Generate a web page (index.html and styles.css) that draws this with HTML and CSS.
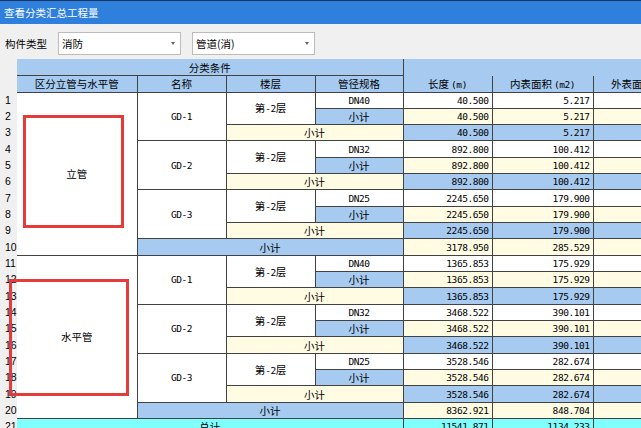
FILE: index.html
```html
<!DOCTYPE html>
<html lang="zh-CN">
<head>
  <meta charset="UTF-8" />
  <title>查看分类汇总工程量</title>
  <link rel="stylesheet" href="styles.css">
</head>
<body>

  <div class="titlebar">查看分类汇总工程量</div>

  <div class="toolbar">
    <span class="label">构件类型</span>
    <div class="combo"><span>消防</span><i class="arrow"></i></div>
    <div class="combo"><span>管道(消)</span><i class="arrow"></i></div>
  </div>

  <table class="grid">
    <colgroup>
      <col style="width:17px"><col style="width:120px"><col style="width:89px"><col style="width:89px">
      <col style="width:88px"><col style="width:89px"><col style="width:101px"><col style="width:101px">
    </colgroup>
    <thead>
      <tr class="h1">
        <td class="rn" rowspan="2"></td>
        <th colspan="4" class="c1">分类条件</th>
        <th colspan="3" class="open"></th>
      </tr>
      <tr class="h2">
        <th class="c1">区分立管与水平管</th>
        <th>名称</th>
        <th>楼层</th>
        <th>管径规格</th>
        <th class="top">长度<span class="lat unit">(m)</span></th>
        <th class="top">内表面积<span class="lat unit">(m2)</span></th>
        <th class="top">外表面积<span class="lat unit">(m2)</span></th>
      </tr>
    </thead>
    <tbody>
      <!-- 立管 -->
      <tr>
        <td class="rn">1</td>
        <td class="c1" rowspan="10">立管</td>
        <td class="code" rowspan="3">GD-1</td>
        <td rowspan="2">第<span class="lat">-2</span>层</td>
        <td class="code">DN40</td>
        <td class="n">40.500</td><td class="n">5.217</td><td></td>
      </tr>
      <tr>
        <td class="rn">2</td>
        <td class="blue">小计</td>
        <td class="n yellow">40.500</td><td class="n yellow">5.217</td><td class="yellow"></td>
      </tr>
      <tr>
        <td class="rn">3</td>
        <td colspan="2" class="yellow">小计</td>
        <td class="n blue">40.500</td><td class="n blue">5.217</td><td class="blue"></td>
      </tr>
      <tr>
        <td class="rn">4</td>
        <td class="code" rowspan="3">GD-2</td>
        <td rowspan="2">第<span class="lat">-2</span>层</td>
        <td class="code">DN32</td>
        <td class="n">892.800</td><td class="n">100.412</td><td></td>
      </tr>
      <tr>
        <td class="rn">5</td>
        <td class="blue">小计</td>
        <td class="n yellow">892.800</td><td class="n yellow">100.412</td><td class="yellow"></td>
      </tr>
      <tr>
        <td class="rn">6</td>
        <td colspan="2" class="yellow">小计</td>
        <td class="n blue">892.800</td><td class="n blue">100.412</td><td class="blue"></td>
      </tr>
      <tr>
        <td class="rn">7</td>
        <td class="code" rowspan="3">GD-3</td>
        <td rowspan="2">第<span class="lat">-2</span>层</td>
        <td class="code">DN25</td>
        <td class="n">2245.650</td><td class="n">179.900</td><td></td>
      </tr>
      <tr>
        <td class="rn">8</td>
        <td class="blue">小计</td>
        <td class="n yellow">2245.650</td><td class="n yellow">179.900</td><td class="yellow"></td>
      </tr>
      <tr>
        <td class="rn">9</td>
        <td colspan="2" class="yellow">小计</td>
        <td class="n blue">2245.650</td><td class="n blue">179.900</td><td class="blue"></td>
      </tr>
      <tr>
        <td class="rn">10</td>
        <td colspan="3" class="blue">小计</td>
        <td class="n yellow">3178.950</td><td class="n yellow">285.529</td><td class="yellow"></td>
      </tr>

      <!-- 水平管 -->
      <tr>
        <td class="rn">11</td>
        <td class="c1" rowspan="10">水平管</td>
        <td class="code" rowspan="3">GD-1</td>
        <td rowspan="2">第<span class="lat">-2</span>层</td>
        <td class="code">DN40</td>
        <td class="n">1365.853</td><td class="n">175.929</td><td></td>
      </tr>
      <tr>
        <td class="rn">12</td>
        <td class="blue">小计</td>
        <td class="n yellow">1365.853</td><td class="n yellow">175.929</td><td class="yellow"></td>
      </tr>
      <tr>
        <td class="rn">13</td>
        <td colspan="2" class="yellow">小计</td>
        <td class="n blue">1365.853</td><td class="n blue">175.929</td><td class="blue"></td>
      </tr>
      <tr>
        <td class="rn">14</td>
        <td class="code" rowspan="3">GD-2</td>
        <td rowspan="2">第<span class="lat">-2</span>层</td>
        <td class="code">DN32</td>
        <td class="n">3468.522</td><td class="n">390.101</td><td></td>
      </tr>
      <tr>
        <td class="rn">15</td>
        <td class="blue">小计</td>
        <td class="n yellow">3468.522</td><td class="n yellow">390.101</td><td class="yellow"></td>
      </tr>
      <tr>
        <td class="rn">16</td>
        <td colspan="2" class="yellow">小计</td>
        <td class="n blue">3468.522</td><td class="n blue">390.101</td><td class="blue"></td>
      </tr>
      <tr>
        <td class="rn">17</td>
        <td class="code" rowspan="3">GD-3</td>
        <td rowspan="2">第<span class="lat">-2</span>层</td>
        <td class="code">DN25</td>
        <td class="n">3528.546</td><td class="n">282.674</td><td></td>
      </tr>
      <tr>
        <td class="rn">18</td>
        <td class="blue">小计</td>
        <td class="n yellow">3528.546</td><td class="n yellow">282.674</td><td class="yellow"></td>
      </tr>
      <tr>
        <td class="rn">19</td>
        <td colspan="2" class="yellow">小计</td>
        <td class="n blue">3528.546</td><td class="n blue">282.674</td><td class="blue"></td>
      </tr>
      <tr>
        <td class="rn">20</td>
        <td colspan="3" class="blue">小计</td>
        <td class="n yellow">8362.921</td><td class="n yellow">848.704</td><td class="yellow"></td>
      </tr>

      <tr class="total">
        <td class="rn">21</td>
        <td colspan="4" class="c1">总计</td>
        <td class="n">11541.871</td><td class="n">1134.233</td><td></td>
      </tr>
    </tbody>
  </table>

  <div class="mark mark-a"></div>
  <div class="mark mark-b"></div>

</body>
</html>
```

FILE: styles.css
```css
* { box-sizing: border-box; margin: 0; padding: 0; }
body {
  width: 641px;
  height: 428px;
  overflow: hidden;
  position: relative;
  background: #f0f0f0;
  font-family: "Noto Sans CJK SC", sans-serif;
  font-size: 10.5px;
  color: #000;
}
.titlebar {
  height: 24px;
  background: #2e80dc;
  border-top: 1px solid #1b3560;
  color: #fff;
  padding-left: 4px;
  display: flex;
  align-items: center;
}
.toolbar {
  height: 35px;
  display: flex;
  align-items: flex-start;
  gap: 11px;
  padding: 8px 0 0 5px;
}
.label {
  line-height: 23px;
}
.combo {
  width: 123px;
  height: 23px;
  background: #fff;
  border: 1px solid #bcbcbc;
  display: flex;
  align-items: center;
  justify-content: space-between;
  padding: 0 5px 0 3px;
}
.arrow {
  width: 0;
  height: 0;
  border-top: 3px solid #666;
  border-left: 2.5px solid transparent;
  border-right: 2.5px solid transparent;
}
.grid {
  table-layout: fixed;
  width: 694px;
  border-collapse: collapse;
}
.grid td, .grid th {
  border: 1px solid #424242;
  background: #fff;
  font-weight: normal;
  text-align: center;
  line-height: 13px;
  padding: 0;
  white-space: nowrap;
  overflow: hidden;
}
.grid thead th {
  background: #a6caf0;
}
.grid tr.h1 { height: 16.5px; }
.grid tr.h2 { height: 16.5px; }
.grid tbody tr { height: 16.33px; }
.grid tr.h1 th { border-top: none; }
.grid th.open { border-bottom: none; }
.grid th.top { border-top: none; }
.grid .rn {
  border: none;
  background: #f0f0f0;
  text-align: left;
  padding-left: 5px;
  font-family: "Liberation Sans", sans-serif;
  font-size: 10.5px;
}
.grid .c1 { border-left: none; }
.grid .n {
  text-align: right;
  padding-right: 3px;
}
.grid .n, .grid .code, .lat {
  font-family: "DejaVu Sans Mono", monospace;
  font-size: 9.5px;
  letter-spacing: -0.45px;
}
.lat.unit { padding-left: 2px; }
.grid .blue { background: #a6caf0; }
.grid .yellow { background: #fffce3; }
.grid .total td { background: #80ffff; }
.grid .total .rn { background: #f0f0f0; }
.mark {
  position: absolute;
  border: 3px solid #e53b3b;
}
.mark-a {
  left: 23px;
  top: 115px;
  width: 101px;
  height: 113px;
}
.mark-b {
  left: 9px;
  top: 279px;
  width: 120px;
  height: 117px;
}
```
